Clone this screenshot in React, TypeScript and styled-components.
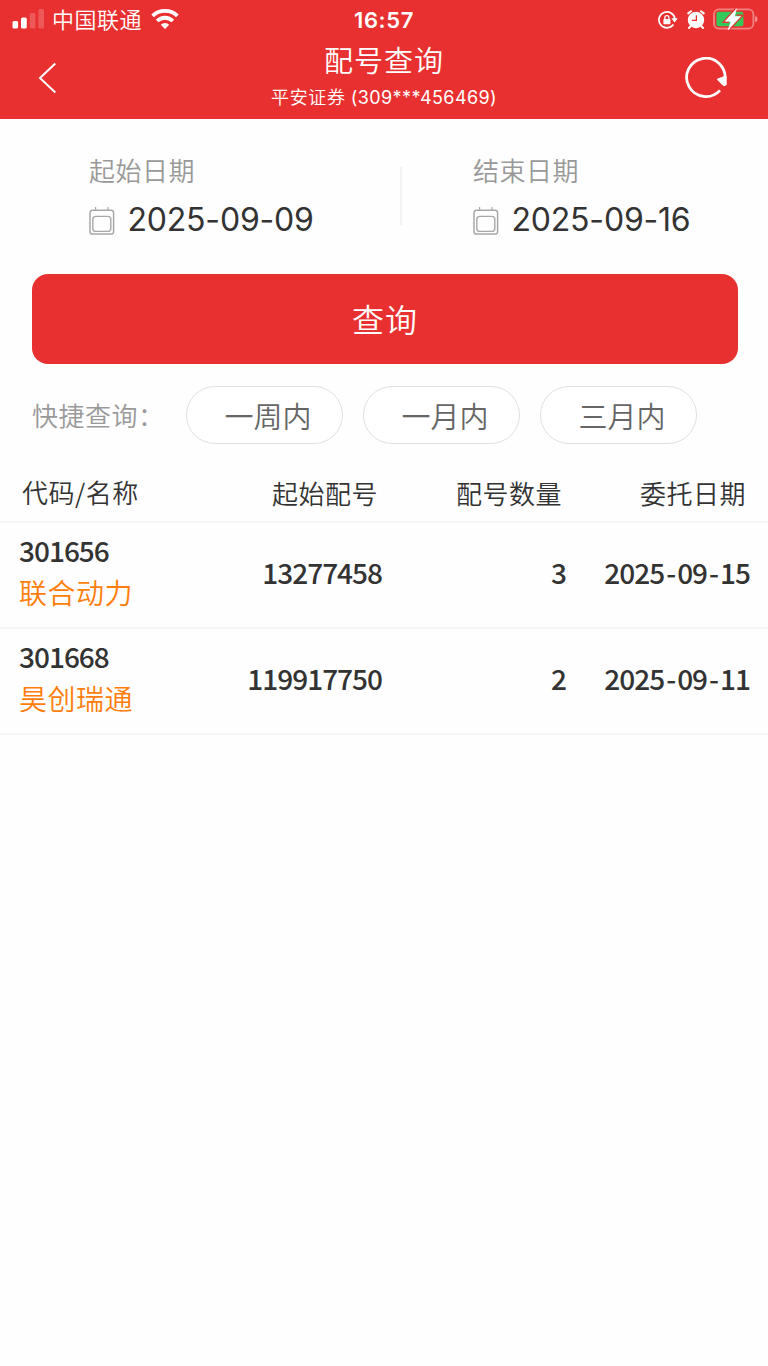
import React from "react";
import styled, { createGlobalStyle } from "styled-components";

const Global = createGlobalStyle`
  * { box-sizing: border-box; }
  body { margin: 0; background: #fff; }
`;

const sans = `Inter, "Noto Sans CJK SC", sans-serif`;
const cjk = `"Noto Sans CJK SC DemiLight", "Noto Sans CJK SC", sans-serif`;
const digits = `"Noto Sans CJK SC", sans-serif`;

const Page = styled.div`
  width: 768px;
  min-height: 1366px;
  background: #fefefe;
  font-family: ${cjk};
  font-weight: 350;
  color: #333;
  white-space: nowrap;
`;

const Header = styled.header`
  height: 119px;
  background: #e93030;
  color: #fff;
`;

const StatusBar = styled.div`
  display: grid;
  grid-template-columns: 1fr 120px 1fr;
  height: 38px;
`;

const StatusLeft = styled.div`
  display: flex;
  align-items: center;
  height: 38px;
  padding-left: 12px;
`;

const Carrier = styled.span`
  font-size: 22px;
  line-height: 30px;
  letter-spacing: 0.5px;
  margin: -3px 9px 0 8px;
`;

const Clock = styled.div`
  font-family: ${sans};
  font-weight: 600;
  font-size: 22px;
  line-height: 40px;
  letter-spacing: 0.6px;
  text-align: center;
`;

const StatusRight = styled.div`
  display: flex;
  justify-content: flex-end;
  align-items: center;
  gap: 8.5px;
  height: 38px;
  padding: 2px 10px 0 0;
`;

const NavBar = styled.div`
  display: grid;
  grid-template-columns: 120px 1fr 120px;
  height: 81px;
`;

const NavButton = styled.button<{ $end?: boolean }>`
  display: flex;
  align-items: center;
  justify-content: ${(p) => (p.$end ? "flex-end" : "flex-start")};
  padding: ${(p) => (p.$end ? "0 41px 1px 0" : "0 0 1px 37px")};
  border: 0;
  background: none;
`;

const Titles = styled.div`
  display: flex;
  flex-direction: column;
  align-items: center;
  padding-top: 1px;
`;

const Title = styled.h1`
  margin: 0;
  font-weight: 350;
  font-size: 29px;
  line-height: 40px;
  letter-spacing: 1px;
`;

const Subtitle = styled.div`
  display: flex;
  align-items: baseline;
  gap: 5px;
  font-size: 18px;
  line-height: 35px;
  letter-spacing: 0.7px;
`;

const Account = styled.span`
  font-family: ${sans};
  font-weight: 400;
  letter-spacing: 0.4px;
`;

const Dates = styled.section`
  display: grid;
  grid-template-columns: 311px 2px 1fr;
  height: 155px;
  padding: 31px 0 0 89px;
`;

const DateField = styled.div<{ $end?: boolean }>`
  padding: 2px 0 0 ${(p) => (p.$end ? "71px" : "0")};
`;

const DateLabel = styled.div`
  font-size: 26px;
  line-height: 36px;
  letter-spacing: 0.5px;
  color: #999;
`;

const DateValue = styled.div`
  display: flex;
  align-items: center;
  gap: 12.5px;
  margin-top: 10px;
  font-family: ${sans};
  font-weight: 400;
  font-size: 32px;
  line-height: 44px;
  letter-spacing: -0.2px;

  svg {
    margin-top: 2px;
  }
`;

const Divider = styled.div`
  width: 2px;
  height: 58px;
  margin-top: 17px;
  background: #f2f2f2;
`;

const Submit = styled.button`
  display: block;
  width: 706px;
  height: 90px;
  margin: 0 0 0 32px;
  padding: 0 0 3px;
  border: 0;
  border-radius: 16px;
  background: #e93030;
  color: #fff;
  font-family: ${cjk};
  font-weight: 350;
  font-size: 32px;
  letter-spacing: 1px;
`;

const Quick = styled.section`
  display: flex;
  align-items: center;
  height: 58px;
  margin-top: 22px;
  padding-left: 32px;
`;

const QuickLabel = styled.span`
  width: 154px;
  padding-bottom: 2px;
  font-size: 26px;
  letter-spacing: 0.5px;
  color: #999;
`;

const Chip = styled.button`
  width: 157px;
  height: 58px;
  margin-right: 20px;
  padding: 0 0 1px 7px;
  border: 1px solid #e0e0e0;
  border-radius: 29px;
  background: #fff;
  color: #666;
  font-family: ${cjk};
  font-weight: 350;
  font-size: 29px;
`;

const Row = styled.div<{ $head?: boolean }>`
  display: grid;
  grid-template-columns: 200px 1fr 184px 184px;
  height: ${(p) => (p.$head ? "79px" : "106px")};
  padding: ${(p) => (p.$head ? "21px 22px 0 22px" : "0 18px 0 19px")};
  border-bottom: 2px solid #f5f5f5;
`;

const HeadCell = styled.div<{ $first?: boolean }>`
  font-size: 26px;
  line-height: ${(p) => (p.$first ? "54px" : "56px")};
  letter-spacing: 0.5px;
  text-align: ${(p) => (p.$first ? "left" : "right")};
`;

const Stock = styled.div`
  padding-top: 6px;
`;

const Code = styled.div`
  font-family: ${digits};
  font-weight: 500;
  font-size: 28px;
  line-height: 42px;
  letter-spacing: -1px;
`;

const Name = styled.div`
  font-size: 28px;
  line-height: 42px;
  letter-spacing: 0.5px;
  color: #ff7d0a;
`;

const Num = styled.div`
  font-family: ${digits};
  font-weight: 500;
  font-size: 28px;
  line-height: 99px;
  letter-spacing: -1px;
  text-align: right;
`;

const Dash = styled.span`
  padding: 0 2px;
`;

const Signal = () => (
  <svg width="32" height="20" viewBox="0 0 32 20" fill="#fff">
    <rect x="0.5" y="12" width="5.6" height="7.5" rx="1.6" />
    <rect x="9" y="8.5" width="5.8" height="11" rx="1.6" />
    <rect x="17.8" y="4" width="5.6" height="15.5" rx="1.6" opacity=".2" />
    <rect x="26.4" y="0" width="5.6" height="19.5" rx="1.6" opacity=".2" />
  </svg>
);

const Wifi = () => (
  <svg width="28" height="21" viewBox="0 0 28 21" fill="none" stroke="#fff" strokeWidth="3.8">
    <path d="M1.6 6.9a18 18 0 0 1 24.8 0" />
    <path d="M6.2 12a11 11 0 0 1 15.6 0" />
    <path d="M14 20l-4.2-4.2a6 6 0 0 1 8.4 0z" fill="#fff" stroke="none" />
  </svg>
);

const RotationLock = () => (
  <svg width="20" height="20" viewBox="0 0 20 20" fill="none" stroke="#fff" strokeWidth="1.7">
    <path d="M15.4 14.6A8 8 0 1 1 16.9 9" />
    <path d="M13.4 8.3h6.3l-3.1 4.3z" fill="#fff" stroke="none" />
    <rect x="5.4" y="9" width="7" height="5.2" rx=".8" fill="#fff" stroke="none" />
    <path d="M6.9 9.5V7.6a2 2 0 0 1 4 0v1.9" strokeWidth="1.3" />
  </svg>
);

const Alarm = () => (
  <svg width="18" height="20" viewBox="0 0 18 20">
    <g stroke="#fff" strokeWidth="2" strokeLinecap="round" fill="none">
      <path d="M1.2 3.4L4 1.2M16.8 3.4L14 1.2M3.4 16.4l-1.4 1.6M14.6 16.4l1.4 1.6" />
    </g>
    <circle cx="9" cy="10" r="8.2" fill="#fff" />
    <path d="M9.4 5.2v5.2H4.8" stroke="#e93030" strokeWidth="1.3" fill="none" />
  </svg>
);

const Battery = () => (
  <svg width="45" height="24" viewBox="0 0 45 24">
    <rect x="1" y="1.3" width="39.4" height="19.4" rx="5" fill="none" stroke="#fff" strokeOpacity=".4" strokeWidth="1.8" />
    <path d="M42.2 7.9v6.4c3-1 3-5.4 0-6.4z" fill="#fff" opacity=".5" />
    <rect x="3.4" y="3.7" width="27" height="14.6" rx="2" fill="#34c759" />
    <path
      d="M23.4.8L11.8 13.4h6.3L15 22 28.2 8.4h-6.7z"
      fill="#fff"
      stroke="#fff"
      strokeWidth=".6"
      strokeLinejoin="round"
    />
    <path d="M22 .8L10 14.4h6M15.8 22.4" fill="none" stroke="#e93030" strokeWidth="1.2" />
    <path d="M29.6 7.6L17.4 20.6M23.4 7.2h6.4" fill="none" stroke="#e93030" strokeWidth="1.2" />
  </svg>
);

const Back = () => (
  <svg width="20" height="32" viewBox="0 0 20 32" fill="none" stroke="#fff" strokeWidth="2">
    <path d="M18.3 1.5L3 16l15.3 14.5" />
  </svg>
);

const Refresh = () => (
  <svg width="43" height="42" viewBox="0 0 43 42" fill="none" stroke="#fff" strokeWidth="2.8">
    <path d="M36 33.4A19.2 19.2 0 1 1 40.9 23" />
    <path d="M34 22.3l7.6-2.6.3 7.6-1.6 1-3.1-2.6z" fill="#fff" strokeWidth="1.8" strokeLinejoin="round" />
  </svg>
);

const Calendar = () => (
  <svg width="26" height="28" viewBox="0 0 26 28" fill="none" stroke="#a8a8a8">
    <rect x="1" y="3.2" width="23.6" height="23.8" rx="2.6" strokeWidth="1.5" />
    <rect x="3.8" y="9.4" width="18" height="15" rx="3" strokeWidth="1.4" />
    <path d="M6.6 0v3M19 0v3" strokeWidth="1.2" />
  </svg>
);

const records = [
  { code: "301656", name: "联合动力", start: "13277458", count: "3", date: "2025-09-15" },
  { code: "301668", name: "昊创瑞通", start: "119917750", count: "2", date: "2025-09-11" },
];

const RecordDate = ({ value }: { value: string }) => {
  const [year, month, day] = value.split("-");
  return (
    <Num>
      {year}<Dash>-</Dash>{month}<Dash>-</Dash>{day}
    </Num>
  );
};

export default function App() {
  return (
    <Page>
      <Global />
      <Header>
        <StatusBar>
          <StatusLeft>
            <Signal />
            <Carrier>中国联通</Carrier>
            <Wifi />
          </StatusLeft>
          <Clock>16:57</Clock>
          <StatusRight>
            <RotationLock />
            <Alarm />
            <Battery />
          </StatusRight>
        </StatusBar>
        <NavBar>
          <NavButton aria-label="返回"><Back /></NavButton>
          <Titles>
            <Title>配号查询</Title>
            <Subtitle>平安证券<Account>(309***456469)</Account></Subtitle>
          </Titles>
          <NavButton $end aria-label="刷新"><Refresh /></NavButton>
        </NavBar>
      </Header>
      <Dates>
        <DateField>
          <DateLabel>起始日期</DateLabel>
          <DateValue><Calendar />2025-09-09</DateValue>
        </DateField>
        <Divider />
        <DateField $end>
          <DateLabel>结束日期</DateLabel>
          <DateValue><Calendar />2025-09-16</DateValue>
        </DateField>
      </Dates>
      <Submit>查询</Submit>
      <Quick>
        <QuickLabel>快捷查询：</QuickLabel>
        <Chip>一周内</Chip>
        <Chip>一月内</Chip>
        <Chip>三月内</Chip>
      </Quick>
      <Row $head>
        <HeadCell $first>代码/名称</HeadCell>
        <HeadCell>起始配号</HeadCell>
        <HeadCell>配号数量</HeadCell>
        <HeadCell>委托日期</HeadCell>
      </Row>
      {records.map((r) => (
        <Row key={r.code}>
          <Stock>
            <Code>{r.code}</Code>
            <Name>{r.name}</Name>
          </Stock>
          <Num>{r.start}</Num>
          <Num>{r.count}</Num>
          <RecordDate value={r.date} />
        </Row>
      ))}
    </Page>
  );
}
